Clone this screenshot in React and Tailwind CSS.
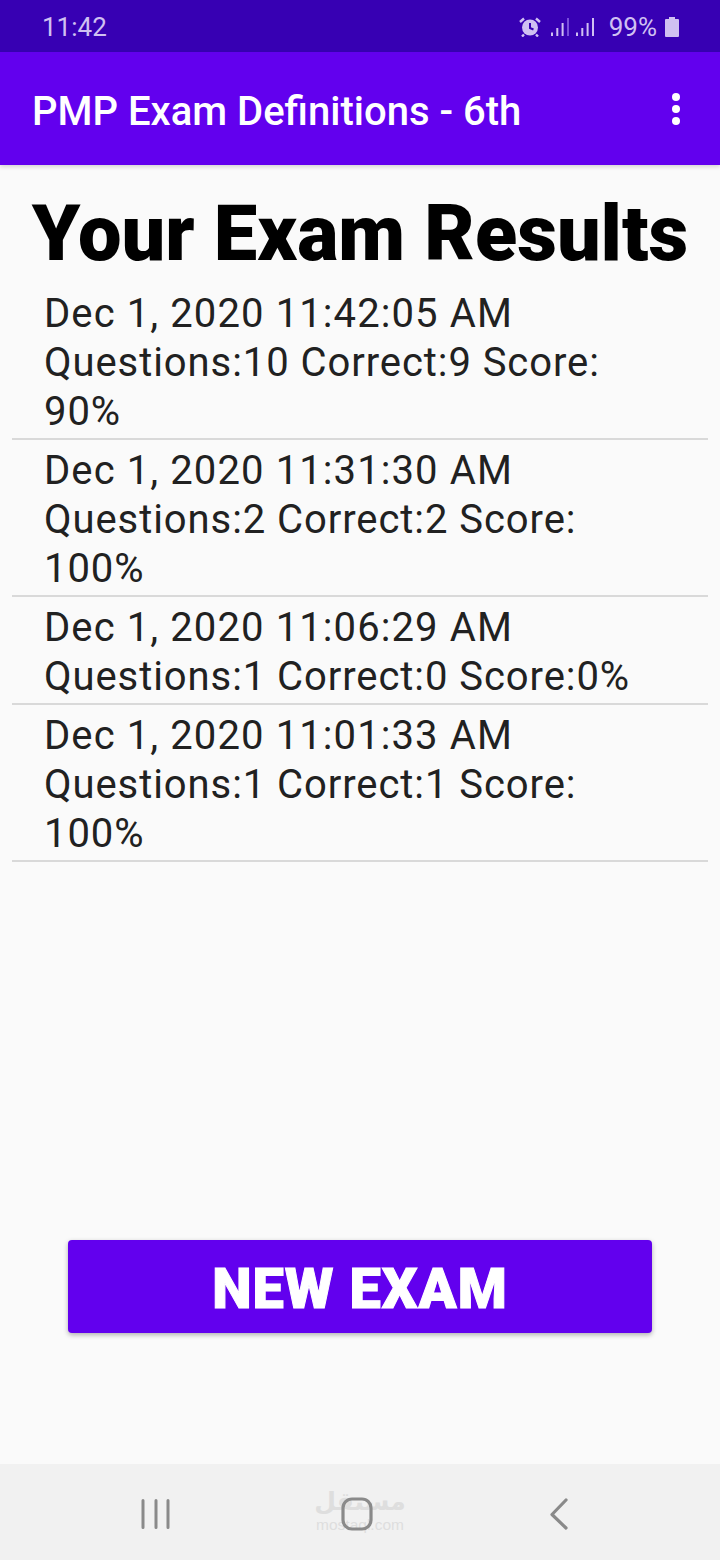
const results = [
  ["Dec 1, 2020 11:42:05 AM", "Questions:10 Correct:9 Score:", "90%"],
  ["Dec 1, 2020 11:31:30 AM", "Questions:2 Correct:2 Score:", "100%"],
  ["Dec 1, 2020 11:06:29 AM", "Questions:1 Correct:0 Score:0%"],
  ["Dec 1, 2020 11:01:33 AM", "Questions:1 Correct:1 Score:", "100%"],
];

function Alarm() {
  return (
    <svg width="22" height="20" viewBox="0 0 22 20" fill="none">
      <circle cx="11" cy="10.500" r="8" fill="#d0c0f2" />
      <path d="M11 6v5l3.500 1.500" stroke="#3700b3" strokeWidth="2" fill="none" />
      <path d="M1 5 5 1.500M21 5 17 1.500M5 17.500l-2 2M17 17.500l2 2" stroke="#d0c0f2" strokeWidth="2.400" />
    </svg>
  );
}

function Signal({ dim }) {
  return (
    <svg width="18" height="20" viewBox="0 0 18 20">
      <rect x="0" y="15.500" width="2" height="3.500" fill="#d0c0f2" />
      <rect x="5.300" y="11" width="2" height="8" fill="#d0c0f2" />
      <rect x="10.600" y="6" width="2" height="13" fill="#d0c0f2" />
      <rect x="16" y="1" width="2" height="18" fill={dim ? "#7a4fdc" : "#d0c0f2"} />
    </svg>
  );
}

export default function App() {
  return (
    <div className="flex h-[1560px] w-[720px] flex-col overflow-hidden bg-[#fafafa] font-['Roboto',sans-serif]">
      <div className="flex h-[52px] shrink-0 items-center justify-between bg-[#3700b3] pl-[42px] pr-[41px] pt-[2px] text-[#d0c0f2]">
        <span className="text-[26px] leading-none">11:42</span>
        <div className="flex items-center">
          <Alarm />
          <div className="ml-[10px] flex items-center gap-[7px]">
            <Signal dim />
            <Signal />
          </div>
          <span className="ml-[15px] text-[26px] leading-none">99%</span>
          <svg className="ml-[8px]" width="14" height="20" viewBox="0 0 14 20">
            <path d="M4 0h6v2h3a1 1 0 0 1 1 1v16a1 1 0 0 1-1 1H1a1 1 0 0 1-1-1V3a1 1 0 0 1 1-1h3z" fill="#d0c0f2" />
          </svg>
        </div>
      </div>

      <div className="z-10 flex h-[113px] shrink-0 items-center justify-between bg-[#6200ee] pl-[32px] pr-[40px] pt-[1px] shadow-[0_2px_4px_rgba(0,0,0,0.15)]">
        <span className="pt-[5px] text-[40px] font-medium leading-none text-white">PMP Exam Definitions - 6th</span>
        <div className="flex flex-col gap-[4px]">
          <span className="h-[8px] w-[8px] rounded-full bg-white" />
          <span className="h-[8px] w-[8px] rounded-full bg-white" />
          <span className="h-[8px] w-[8px] rounded-full bg-white" />
        </div>
      </div>

      <h1 className="mt-[23px] h-[101px] whitespace-nowrap text-center text-[77.5px] font-black leading-[92px] text-black">Your Exam Results</h1>

      <div className="mx-[12px]">
        {results.map((lines) => (
          <div key={lines[0]} className="border-b-2 border-[#d9d9d9] pb-[2px] pl-[32px] pr-[12px] text-[40px] leading-[49px] tracking-[0.93px] text-[#212121] first:pt-0 [&:not(:first-child)]:pt-[6px]">
            {lines.map((l, i) => (
              <div key={l} className={i === 0 ? "whitespace-nowrap tracking-[1.1px]" : "whitespace-nowrap"}>{l}</div>
            ))}
          </div>
        ))}
      </div>

      <div className="flex flex-1 flex-col justify-end">
        <button type="button" className="mx-[68px] mb-[131px] flex h-[93px] items-center justify-center rounded-[4px] bg-[#6200ee] pt-[5px] text-[56px] font-black tracking-[1px] text-white shadow-[0_2px_5px_rgba(0,0,0,0.3)] [-webkit-text-stroke:1px_white]">
          NEW EXAM
        </button>
        <div className="relative h-[96px] shrink-0 bg-[#f1f1f1]">
          <svg className="absolute left-[141px] top-[35px]" width="30" height="30" viewBox="0 0 30 30" stroke="#8a8a8a" strokeWidth="3" strokeLinecap="round">
            <path d="M2 1.500v27M15 1.500v27M27 1.500v27" />
          </svg>
          <div className="absolute left-[306px] top-[22px] flex w-[108px] flex-col items-center text-[#dedede]">
            <span className="font-['DejaVu_Sans',sans-serif] text-[25px] font-bold leading-[31px]">مستقل</span>
            <span className="font-['Liberation_Sans',sans-serif] text-[15.500px] leading-[15px]">mostaql.com</span>
          </div>
          <svg className="absolute left-[341px] top-[33px]" width="32" height="34" viewBox="0 0 32 34" fill="none" stroke="#8a8a8a" strokeWidth="3.200">
            <rect x="2" y="2" width="28" height="30" rx="9" />
          </svg>
          <svg className="absolute left-[548px] top-[33px]" width="22" height="34" viewBox="0 0 22 34" fill="none" stroke="#8a8a8a" strokeWidth="3.200" strokeLinecap="round" strokeLinejoin="round">
            <path d="M18 3 4 17.500 18 31" />
          </svg>
        </div>
      </div>
    </div>
  );
}
